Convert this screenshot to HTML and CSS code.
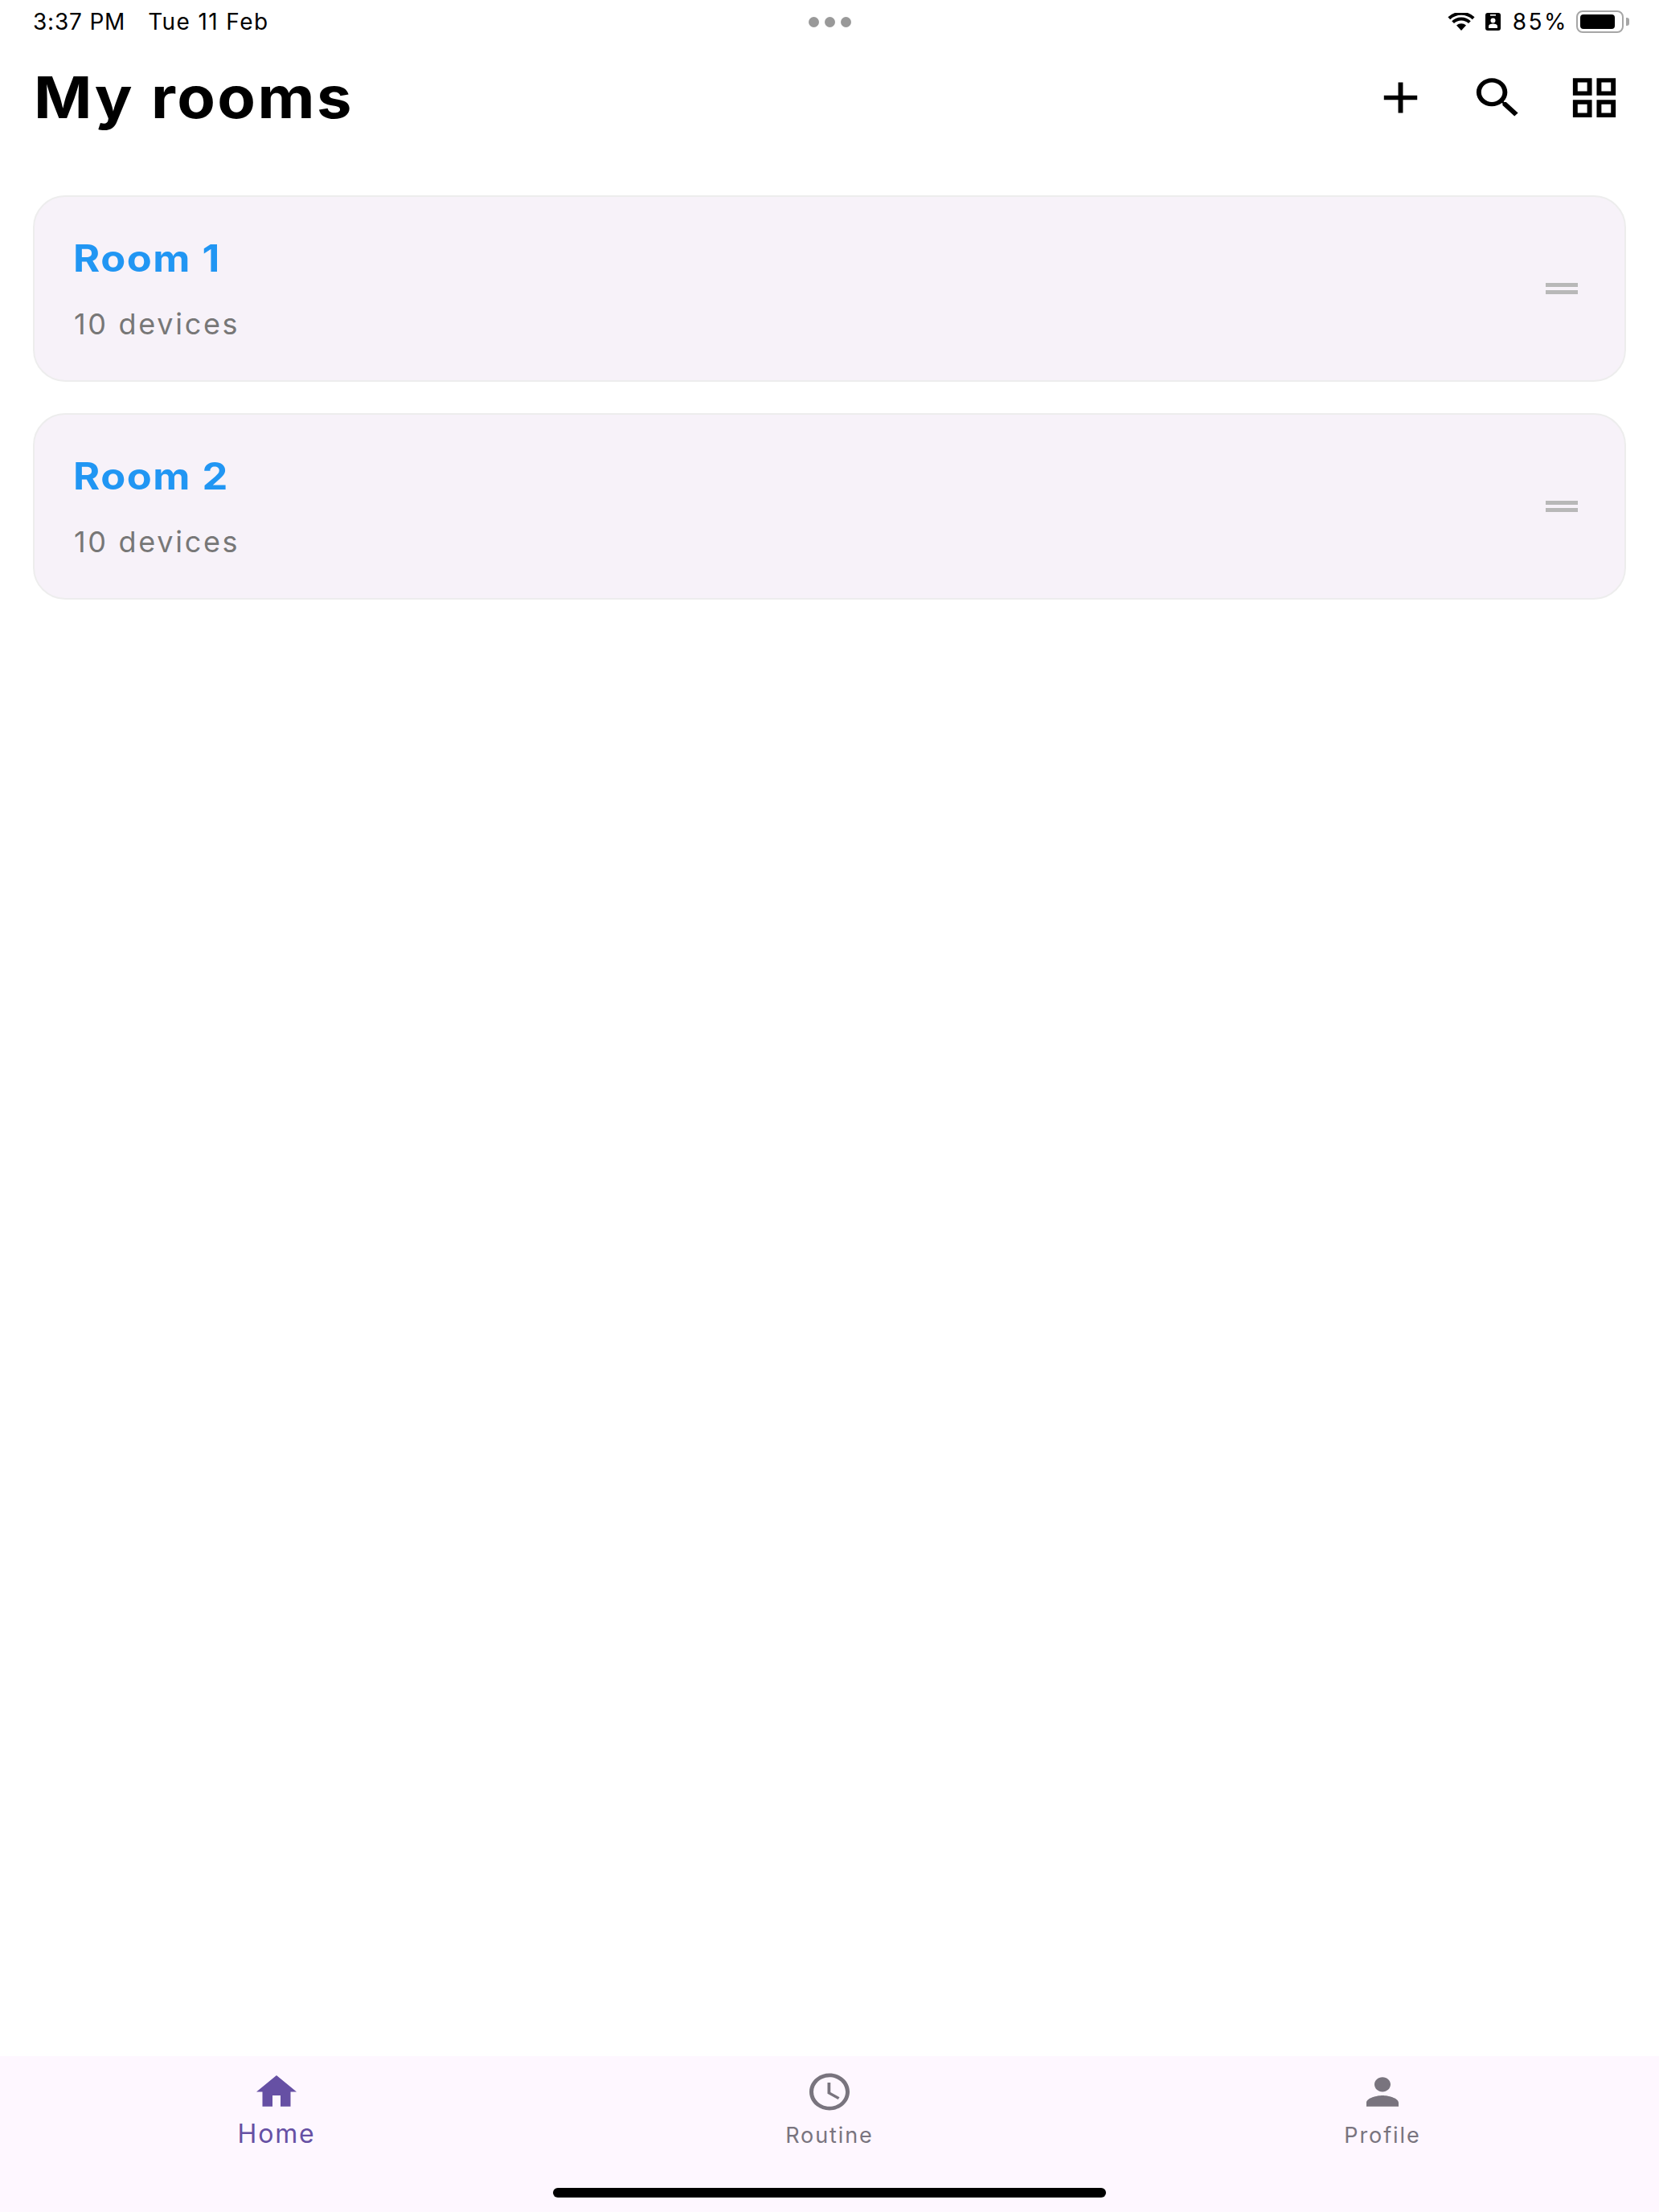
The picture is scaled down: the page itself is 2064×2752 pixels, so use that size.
FILE: index.html
```html
<!DOCTYPE html>
<html lang="en">
<head>
<meta charset="utf-8">
<title>My rooms</title>
<link rel="stylesheet" href="styles.css">
</head>
<body>
<div class="page">
  <div class="status">
    <div class="status-left"><span class="time">3:37 PM</span><span class="date">Tue 11 Feb</span></div>
    <div class="dots"><i></i><i></i><i></i></div>
    <div class="status-right">
      <svg class="wifi" viewBox="0 0 34 22"><path d="M17 22 L11 15.6 A9 9 0 0 1 23 15.6 Z" fill="#000"/><path d="M6.6 11.6 A15 15 0 0 1 27.4 11.6" fill="none" stroke="#000" stroke-width="4"/><path d="M1.8 6.8 A22 22 0 0 1 32.2 6.8" fill="none" stroke="#000" stroke-width="4"/></svg>
      <svg class="idcard" viewBox="0 0 19 22"><rect width="19" height="22" rx="3" fill="#000"/><rect x="6" y="2" width="7" height="1.6" fill="#fff"/><circle cx="9.5" cy="9.5" r="3" fill="#fff"/><path d="M4 19v-2.5c0-2 2.5-3 5.5-3s5.500 1 5.500 3V19z" fill="#fff"/></svg>
      <span class="pct">85%</span>
      <div class="battery"><div class="battery-level"></div></div>
      <div class="battery-nub"></div>
    </div>
  </div>

  <header class="header">
    <h1 class="title">My rooms</h1>
    <div class="actions">
      <svg class="action" viewBox="0 0 24 24" preserveAspectRatio="none"><path d="M19 13h-6v6h-2v-6H5v-2h6V5h2v6h6v2z"/></svg>
      <svg class="action" viewBox="0 0 24 24" preserveAspectRatio="none"><path d="M15.5 14h-.79l-.28-.27C15.410 12.590 16 11.110 16 9.500 16 5.910 13.090 3 9.500 3S3 5.910 3 9.500 5.910 16 9.500 16c1.610 0 3.090-.59 4.230-1.570l.27.28v.79l5 4.990L20.490 19l-4.990-5zm-6 0C7.010 14 5 11.990 5 9.500S7.010 5 9.500 5 14 7.010 14 9.500 11.990 14 9.500 14z"/></svg>
      <svg class="action" viewBox="0 0 24 24" preserveAspectRatio="none"><path d="M3 3v8h8V3H3zm6 6H5V5h4v4zm-6 4v8h8v-8H3zm6 6H5v-4h4v4zm4-16v8h8V3h-8zm6 6h-4V5h4v4zm-6 4v8h8v-8h-8zm6 6h-4v-4h4v4z"/></svg>
    </div>
  </header>

  <main class="rooms">
    <div class="card">
      <div class="card-text">
        <div class="room-name">Room 1</div>
        <div class="room-sub">10 devices</div>
      </div>
      <div class="handle"><i></i><i></i></div>
    </div>
    <div class="card">
      <div class="card-text">
        <div class="room-name">Room 2</div>
        <div class="room-sub">10 devices</div>
      </div>
      <div class="handle"><i></i><i></i></div>
    </div>
  </main>

  <nav class="nav">
    <div class="nav-item active">
      <svg class="nav-icon" viewBox="0 0 24 24" preserveAspectRatio="none"><path d="M10 20v-6h4v6h5v-8h3L12 3 2 12h3v8z"/></svg>
      <span class="nav-label">Home</span>
    </div>
    <div class="nav-item">
      <svg class="nav-icon" viewBox="0 0 24 24" preserveAspectRatio="none"><path d="M11.990 2C6.470 2 2 6.480 2 12s4.470 10 9.990 10C17.520 22 22 17.520 22 12S17.520 2 11.990 2zM12 20c-4.420 0-8-3.580-8-8s3.580-8 8-8 8 3.580 8 8-3.580 8-8 8zm.5-13H11v6l5.250 3.150.75-1.230-4.500-2.670z"/></svg>
      <span class="nav-label">Routine</span>
    </div>
    <div class="nav-item">
      <svg class="nav-icon" viewBox="0 0 24 24" preserveAspectRatio="none"><path d="M12 12c2.210 0 4-1.790 4-4s-1.790-4-4-4-4 1.790-4 4 1.790 4 4 4zm0 2c-2.670 0-8 1.340-8 4v2h16v-2c0-2.660-5.330-4-8-4z"/></svg>
      <span class="nav-label">Profile</span>
    </div>
    <div class="home-indicator"></div>
  </nav>
</div>
</body>
</html>
```
FILE: styles.css
```css
* { box-sizing: border-box; }
html, body { margin: 0; padding: 0; background: #fff; }
body { font-family: "Inter", "Liberation Sans", sans-serif; }
.page { width: 2064px; height: 2752px; display: flex; flex-direction: column; overflow: hidden; }

.status { height: 54px; padding: 0 37px; display: grid; grid-template-columns: 1fr auto 1fr; align-items: center; color: #000; font-size: 28px; }
.status-left { display: flex; gap: 28px; padding-left: 4px; }
.time { letter-spacing: 0.8px; }
.date { letter-spacing: 1.4px; }
.dots { display: flex; gap: 7px; }
.dots i { width: 13px; height: 13px; border-radius: 50%; background: #999; }
.status-right { display: flex; justify-content: flex-end; align-items: center; }
.wifi { width: 34px; height: 22px; margin-right: 13px; }
.idcard { width: 19px; height: 22px; margin-right: 15px; }
.pct { margin-right: 10px; letter-spacing: 2.500px; }
.battery { width: 59px; height: 28px; border: 2px solid #a6a6a6; border-radius: 8px; padding: 3px; }
.battery-level { width: 43px; height: 100%; background: #000; border-radius: 4px; }
.battery-nub { width: 4px; height: 10px; margin-left: 3px; background: #a6a6a6; border-radius: 0 3px 3px 0; }

.header { height: 189px; padding: 0 45px 55px 42px; display: flex; align-items: center; justify-content: space-between; }
.title { margin: 0; font-size: 72px; font-weight: 700; color: #000; line-height: 80px; letter-spacing: 2.300px; transform: scaleX(1.08); transform-origin: left center; }
.actions { display: flex; gap: 49.500px; }
.action { width: 71px; height: 65px; fill: #000; display: block; }

.rooms { flex: 1; padding: 0 41px; display: flex; flex-direction: column; gap: 38.500px; }
.card { height: 232px; background: #f7f2f9; border: 2px solid #ededed; border-radius: 40px; display: flex; align-items: center; justify-content: space-between; padding: 0 58px 0 49px; }
.card-text { display: flex; flex-direction: column; }
.room-name { font-size: 46px; font-weight: 700; line-height: 56px; color: #2196f3; letter-spacing: 1.400px; margin-left: -1px; transform: scaleX(1.1); transform-origin: left center; }
.room-sub { margin-top: 32px; font-size: 36px; line-height: 44px; color: #777; letter-spacing: 2.700px; }
.handle { display: flex; flex-direction: column; gap: 4px; }
.handle i { display: block; width: 40px; height: 5px; background: #b8b8b8; }

.nav { position: relative; height: 194px; background: #fef7ff; display: grid; grid-template-columns: repeat(3, 1fr); }
.nav-item { display: flex; flex-direction: column; align-items: center; padding-top: 17px; color: #79747e; fill: #79747e; }
.nav-item.active { color: #6650a4; fill: #6650a4; }
.nav-icon { width: 60px; height: 55px; display: block; }
.nav-label { margin-top: 10px; font-size: 27px; line-height: 34px; letter-spacing: 1.900px; }
.active .nav-label { margin-top: 6px; font-size: 32px; line-height: 38px; letter-spacing: 1.800px; }
.home-indicator { position: absolute; left: 688px; bottom: 18px; width: 688px; height: 12px; border-radius: 6px; background: #000; }
```
